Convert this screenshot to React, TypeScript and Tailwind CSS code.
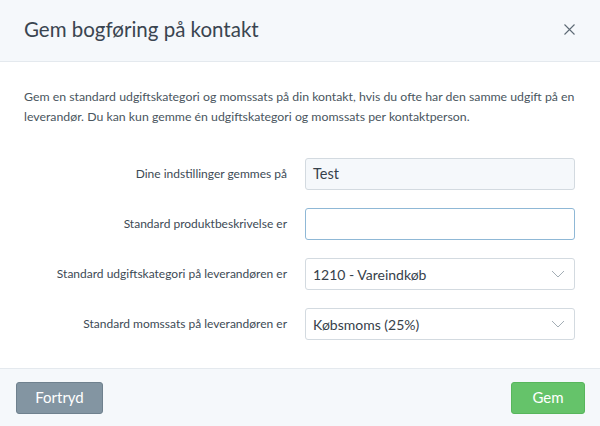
import React from "react";

const Chevron = () => (
  <svg width="14" height="8" viewBox="0 0 14 8" fill="none" className="shrink-0">
    <path d="M1 1l6 6 6-6" stroke="#a3adb5" strokeWidth="1" />
  </svg>
);

function Row({ label, children }: { label: string; children: React.ReactNode }) {
  return (
    <div className="flex items-center">
      <div className="w-[288px] pr-[1px] text-right text-[12px] text-[#3d4a55]">{label}</div>
      <div className="ml-[17px] w-[270px]">{children}</div>
    </div>
  );
}

export default function App() {
  return (
    <div className="w-[600px] h-[426px] bg-white flex flex-col text-[#3d4a55]" style={{ fontFamily: "Lato, 'Open Sans', sans-serif" }}>
      <div className="h-[62px] bg-[#f5f8fb] border-b border-[#e4e9ee] flex items-center justify-between pl-[24px] pr-[25px] pb-[2px] shrink-0">
        <h1 className="text-[20.5px] text-[#3a4550] leading-none">Gem bogføring på kontakt</h1>
        <svg width="11" height="11" viewBox="0 0 11 11" fill="none">
          <path d="M0.5 0.5l10 10M10.5 0.5l-10 10" stroke="#5d6a75" strokeWidth="1.1" />
        </svg>
      </div>
      <div className="flex-1 flex flex-col pt-[25px]">
        <p className="px-[24px] text-[12.3px] leading-[20px] text-[#4a5660]">
          Gem en standard udgiftskategori og momssats på din kontakt, hvis du ofte har den samme udgift på en leverandør. Du kan kun gemme én udgiftskategori og momssats per kontaktperson.
        </p>
        <div className="mt-[31px] flex flex-col gap-[18px]">
          <Row label="Dine indstillinger gemmes på">
            <div className="h-[32px] rounded-[3px] border border-[#d3dae0] bg-[#f5f8fb] flex items-center px-[7px] text-[14.5px] text-[#36414b]">Test</div>
          </Row>
          <Row label="Standard produktbeskrivelse er">
            <div className="h-[32px] rounded-[3px] border border-[#8fb8d6] bg-white" />
          </Row>
          <Row label="Standard udgiftskategori på leverandøren er">
            <div className="h-[32px] rounded-[3px] border border-[#d3dae0] bg-white flex items-center justify-between pl-[7px] pr-[9px] text-[14px] text-[#36414b]">
              <span>1210 - Vareindkøb</span>
              <Chevron />
            </div>
          </Row>
          <Row label="Standard momssats på leverandøren er">
            <div className="h-[32px] rounded-[3px] border border-[#d3dae0] bg-white flex items-center justify-between pl-[7px] pr-[9px] text-[14px] text-[#36414b]">
              <span>Købsmoms (25%)</span>
              <Chevron />
            </div>
          </Row>
        </div>
      </div>
      <div className="h-[58px] bg-[#f5f8fb] border-t border-[#e4e9ee] flex items-center justify-between pl-[16px] pr-[15px] shrink-0">
        <button className="h-[32px] w-[87px] rounded-[3px] bg-[#8395a2] border border-[#6f818e] text-white text-[15px]">Fortryd</button>
        <button className="h-[32px] w-[74px] rounded-[3px] bg-[#65c36a] border border-[#57b65c] text-white text-[15px]">Gem</button>
      </div>
    </div>
  );
}
